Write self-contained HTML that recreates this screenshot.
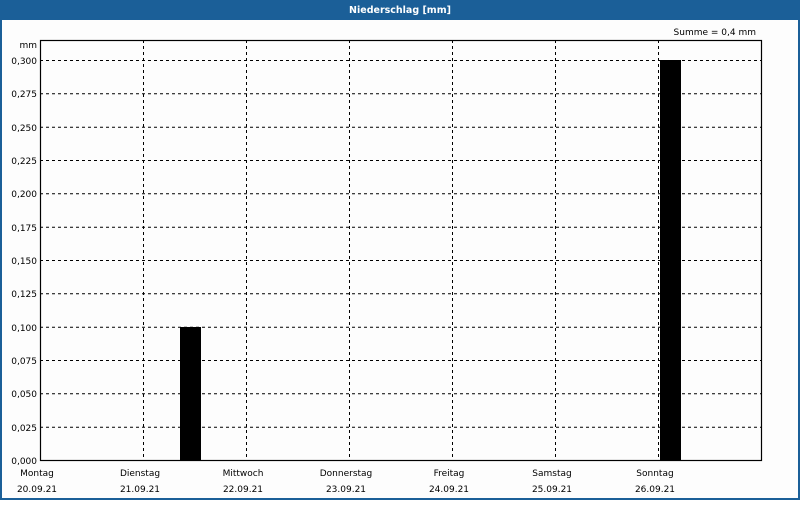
<!DOCTYPE html>
<html><head><meta charset="utf-8"><style>
html,body{margin:0;padding:0;background:#fff}
svg text{font-family:"DejaVu Sans","Liberation Sans",sans-serif;font-size:9px;fill:#000}
</style></head><body>
<svg width="800" height="500" xmlns="http://www.w3.org/2000/svg">
<rect x="0" y="0" width="800" height="500" fill="#1b5f98"/>
<rect x="2" y="20" width="796" height="478" fill="#fdfdfd"/>
<text x="400" y="13" text-anchor="middle" style="fill:#fff;font-weight:bold;font-size:9.5px">Niederschlag [mm]</text>
<text x="756" y="35" text-anchor="end">Summe = 0,4 mm</text>
<text x="37" y="48" text-anchor="end">mm</text>
<g stroke="#000" stroke-width="1" stroke-dasharray="3,3" fill="none">
<path d="M40 60.5H761M40 93.8H761M40 127.2H761M40 160.5H761M40 193.8H761M40 227.2H761M40 260.5H761M40 293.8H761M40 327.2H761M40 360.5H761M40 393.8H761M40 427.2H761"/>
<path d="M143.5 40V460M246.5 40V460M349.5 40V460M452.5 40V460M555.5 40V460M658.5 40V460"/>
</g>
<rect x="180" y="327" width="21" height="133" fill="#000"/>
<rect x="660" y="60" width="21" height="400" fill="#000"/>
<rect x="40.5" y="40.5" width="721" height="420" fill="none" stroke="#000" stroke-width="1.2"/>
<g text-anchor="end">
<text x="37" y="64">0,300</text><text x="37" y="97">0,275</text><text x="37" y="131">0,250</text>
<text x="37" y="164">0,225</text><text x="37" y="197">0,200</text><text x="37" y="231">0,175</text>
<text x="37" y="264">0,150</text><text x="37" y="297">0,125</text><text x="37" y="331">0,100</text>
<text x="37" y="364">0,075</text><text x="37" y="397">0,050</text><text x="37" y="431">0,025</text>
<text x="37" y="464">0,000</text>
</g>
<g text-anchor="middle">
<text x="37" y="476">Montag</text><text x="37" y="492">20.09.21</text>
<text x="140" y="476">Dienstag</text><text x="140" y="492">21.09.21</text>
<text x="243" y="476">Mittwoch</text><text x="243" y="492">22.09.21</text>
<text x="346" y="476">Donnerstag</text><text x="346" y="492">23.09.21</text>
<text x="449" y="476">Freitag</text><text x="449" y="492">24.09.21</text>
<text x="552" y="476">Samstag</text><text x="552" y="492">25.09.21</text>
<text x="655" y="476">Sonntag</text><text x="655" y="492">26.09.21</text>
</g>
</svg>
</body></html>
